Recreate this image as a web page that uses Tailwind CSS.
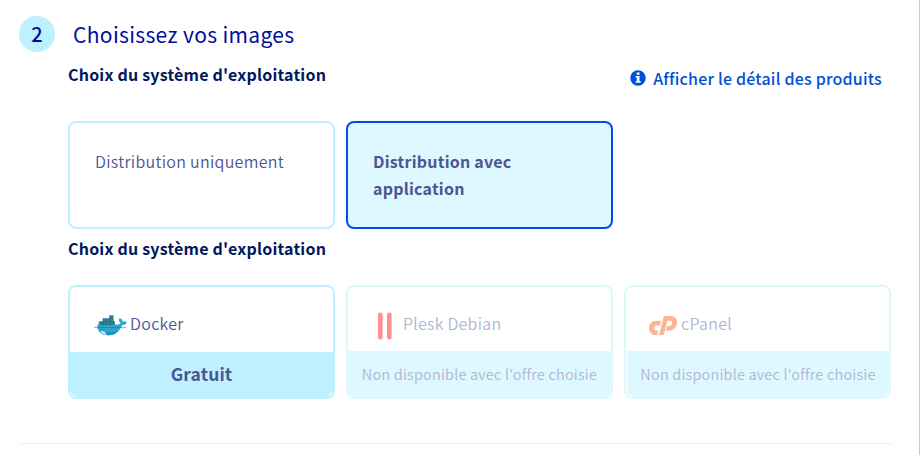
<!DOCTYPE html>
<html lang="fr">
<head>
<meta charset="utf-8">
<title>Choisissez vos images</title>
<script src="https://cdn.jsdelivr.net/npm/@tailwindcss/browser@4"></script>
</head>
<body class="bg-white">
<main class="w-[920px] h-[455px] overflow-hidden border-r border-[#c8c8e4] pl-[19px] pt-4 font-['Noto_Sans_CJK_SC',sans-serif] text-[#4d5592]">
  <header class="flex items-center h-9">
    <span class="flex items-center justify-center size-9 rounded-full bg-[#bef1ff] text-[#000e9c] text-[20px] leading-9 font-medium">2</span>
    <h1 class="ml-[18px] text-[21px] leading-9 tracking-[0.34px] text-[#000e9c] whitespace-nowrap"><span>Choisissez vos images</span></h1>
  </header>
  <div class="ml-[49px] w-[823px]">
    <div class="flex justify-between h-[69px]">
      <h2 class="mt-[10px] text-[16px] leading-6 tracking-[0.2px] font-bold text-[#00185e] whitespace-nowrap"><span>Choix du système d'exploitation</span></h2>
      <a class="flex items-center h-6 mt-[14px] mr-[9px] text-[16px] leading-6 tracking-[0.2px] font-medium text-[#0050d7] whitespace-nowrap">
        <svg class="size-4 mr-[7px]" viewBox="0 0 16 16"><circle cx="8" cy="8" r="7.7" fill="#0050d7"/><path d="M6.7 2.4h2.8v2.300H6.700zM5.600 6h3.900v5.200h1.200v1.600H5.600v-1.600h1.200V7.600H5.600z" fill="#fff"/></svg>
        <span>Afficher le détail des produits</span>
      </a>
    </div>
    <div class="flex gap-[11px]">
      <div class="w-[267px] h-[108px] rounded-lg border-2 border-[#bef1ff] px-[25px] pt-[25px] text-[16px] leading-[27px] tracking-[0.3px] font-[350]"><span>Distribution uniquement</span></div>
      <div class="w-[267px] h-[108px] rounded-lg border-2 border-[#0050d7] bg-[#def8ff] px-[25px] pt-[25px] text-[16px] leading-[27px] tracking-[0.22px] font-bold"><span>Distribution avec</span><br><span>application</span></div>
    </div>
    <h2 class="mt-[7px] text-[16px] leading-6 tracking-[0.2px] font-bold text-[#00185e] whitespace-nowrap"><span>Choix du système d'exploitation</span></h2>
    <div class="flex gap-[11px] mt-[25px]">
      <div class="flex flex-col w-[267px] h-[114px] rounded-lg border-2 border-[#bef1ff]">
        <div class="flex items-center h-[65px] pt-[7px] pl-[23px] text-[16px] leading-6 tracking-[0.3px] font-[350]">
          <svg class="w-[35px] h-[22px] mr-[2px] mt-[3px]" viewBox="0 0 35 22">
            <path d="M5.800 7.300h3.700V4.200h6.700V1.300h4.400v6h1.300V11H5.800z" fill="#2f8499"/>
            <path d="M9.700 7.300h11M9.700 7v4M13.300 4.500v6.500M16.900 4.300v6.700M20.300 7v4M16.500 4.300h3.800M6 10.800h16" stroke="#2b5d6b" stroke-width=".5" fill="none"/>
            <path d="M4.200 10.800c7 .2 15.500.4 20.300-.2 2-.3 3.100-.8 3.200-1.700-2-1.200-2.200-3-1-5 1.900.9 3 2.300 3.100 4 1.200-.5 2.900-.4 4.100.3-.9 2-2.600 2.900-4.800 2.900C27 17 22.500 21.300 15.500 21.300 8 21.300 4.300 17 4.200 10.800z" fill="#28a5d2"/>
            <path d="M5.500 15.500c1.400 3.800 4.800 5.800 10 5.800 4.300 0 7.600-1.700 9.900-4.600-4 1.800-8.400 2.200-12.900 1.300-2.500-.5-4.800-1.200-7-2.500z" fill="#1690bf"/>
            <path d="M7 16.800l5 1c.2 1.300 1 2.300 2.500 3.200-3.800 0-6.300-1.600-7.500-4.200z" fill="#c9e9ee"/>
            <path d="M1 13.800l1.600-.6 1.700.6 2-.6 2.500.6 2.500-.6 2.500.6 2.500-.6 2.500.6 2.500-.6 2.500.6 3-.6 3 .6 3-.4" stroke="#3a6672" stroke-width=".6" fill="none"/>
          </svg>
          <span>Docker</span>
        </div>
        <div class="h-[45px] rounded-b-lg bg-[#bef1ff] text-center text-[17.5px] leading-[44px] tracking-[0.1px] font-bold"><span>Gratuit</span></div>
      </div>
      <div class="flex flex-col w-[267px] h-[114px] rounded-lg border-2 border-[#def8ff] text-[#b1b5d5]">
        <div class="flex items-center h-16 pt-[8px] pl-[29px] text-[16px] leading-6 tracking-[0.25px] font-[350]">
          <svg class="w-[15px] h-7 mr-[11px] mt-[5px]" viewBox="0 0 15 28"><rect x="1" y=".5" width="4.600" height="27" rx="2.200" fill="#ff8f91"/><rect x="10" y=".5" width="4.600" height="27" rx="2.200" fill="#ff8f91"/></svg>
          <span>Plesk Debian</span>
        </div>
        <div class="h-[46px] rounded-b-lg bg-[#def8ff] text-center text-[14.5px] leading-[46px] tracking-[0.2px] font-[350] whitespace-nowrap"><span>Non disponible avec l'offre choisie</span></div>
      </div>
      <div class="flex flex-col w-[267px] h-[114px] rounded-lg border-2 border-[#def8ff] text-[#b1b5d5]">
        <div class="flex items-center h-16 pt-[8px] pl-[23px] text-[16px] leading-6 tracking-[0.3px] font-[350]">
          <svg class="w-[28px] h-[19px] mr-[4px] mt-[5px]" viewBox="0 0 28 19">
            <path d="M12.300 4.800H7C3 4.800 0 8 0 12.200 0 16.100 2.700 19 6.500 19h1.800l1.200-4.600H7.200c-1.300 0-2.200-.9-2.200-2.200 0-1.500 1.100-2.700 2.500-2.700H11z" fill="#fbb696"/>
            <path d="M14.900 0h6.600C25.400 0 28 2.500 28 6.200c0 4.700-3.400 8.300-7.900 8.300h-3.400l1.300-4.600h2.200c1.900 0 3-1.100 3-2.900 0-1.500-.9-2.300-2.400-2.300H18.500L14.700 19h-4.700z" fill="#fbb696"/>
          </svg>
          <span>cPanel</span>
        </div>
        <div class="h-[46px] ml-px rounded-b-lg bg-[#def8ff] text-center text-[14.5px] leading-[46px] tracking-[0.2px] font-[350] whitespace-nowrap"><span>Non disponible avec l'offre choisie</span></div>
      </div>
    </div>
  </div>
  <hr class="mt-11 w-[873px] border-t border-[#f0f0f0]">
</main>
</body>
</html>
